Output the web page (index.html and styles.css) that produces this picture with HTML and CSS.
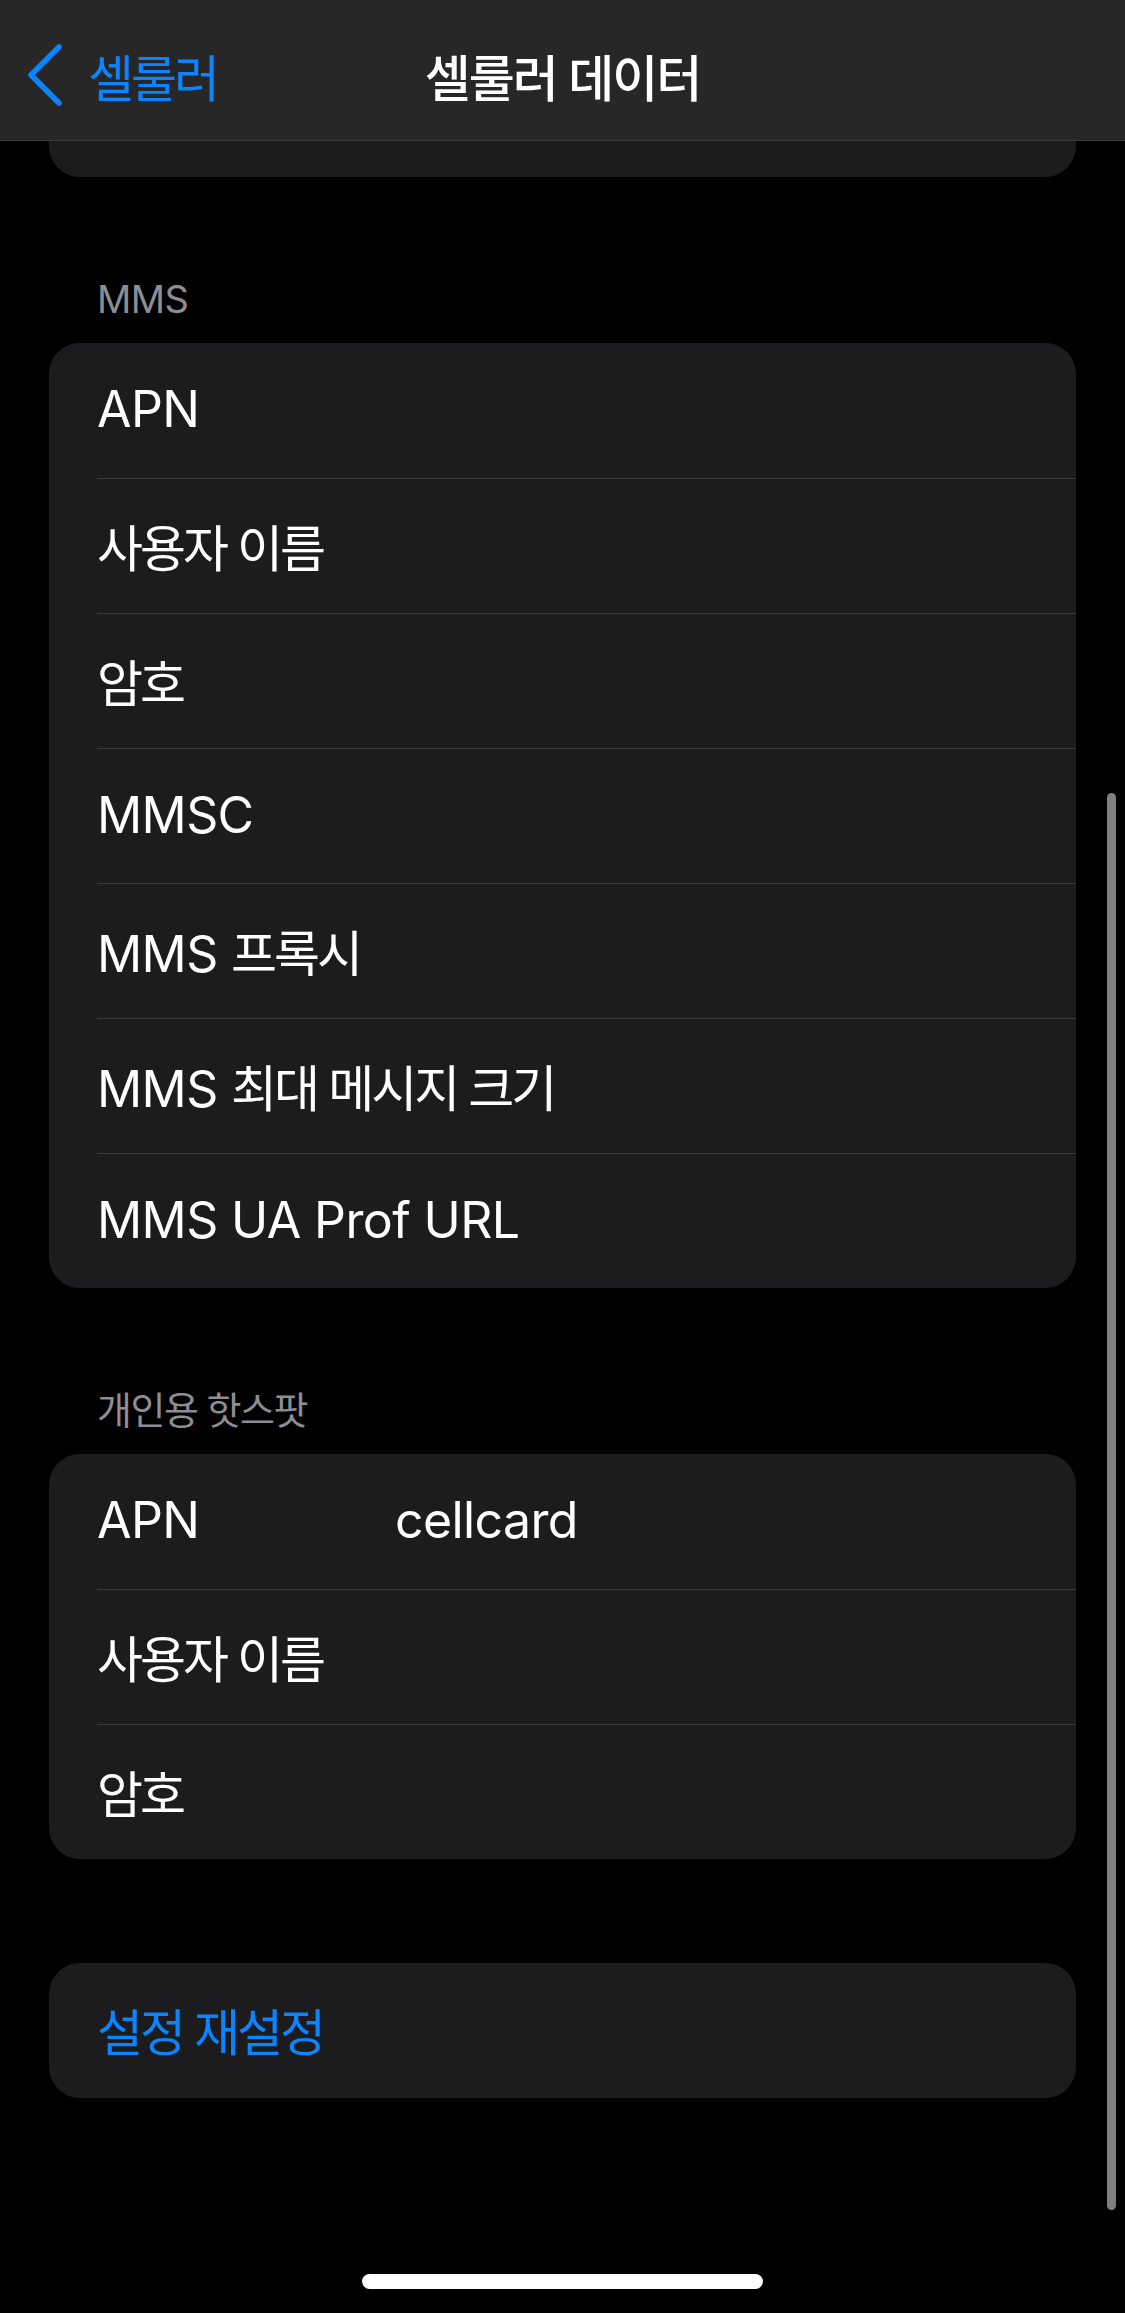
FILE: index.html
```html
<!DOCTYPE html>
<html lang="ko">
<head>
    <meta charset="UTF-8">
    <title>셀룰러 데이터</title>
    <link rel="stylesheet" href="styles.css">
</head>
<body>
    <div class="screen">
        <div class="nav">
            <div class="nav_back">
                <svg class="chevron" width="40" height="62" viewBox="0 0 40 62">
                    <path d="M33 3 L5 31 L33 59" fill="none" stroke="#0a84ff" stroke-width="5.5" stroke-linecap="round" stroke-linejoin="round"/>
                </svg>
                <span class="ko">셀룰러</span>
            </div>
            <div class="nav_title ko">셀룰러 데이터</div>
            <div></div>
        </div>

        <div class="card card_stub"></div>

        <div class="group_head">MMS</div>
        <div class="card">
            <div class="row"><span class="key">APN</span></div>
            <div class="row"><span class="key ko">사용자 이름</span></div>
            <div class="row"><span class="key ko">암호</span></div>
            <div class="row"><span class="key">MMSC</span></div>
            <div class="row"><span class="key">MMS <span class="ko">프록시</span></span></div>
            <div class="row"><span class="key">MMS <span class="ko">최대 메시지 크기</span></span></div>
            <div class="row"><span class="key">MMS UA Prof URL</span></div>
        </div>

        <div class="group_head ko">개인용 핫스팟</div>
        <div class="card">
            <div class="row"><span class="key key_fixed">APN</span><span class="value">cellcard</span></div>
            <div class="row"><span class="key key_fixed ko">사용자 이름</span></div>
            <div class="row"><span class="key key_fixed ko">암호</span></div>
        </div>

        <div class="card card_reset">
            <div class="row row_blue"><span class="key ko">설정 재설정</span></div>
        </div>

        <div class="scrollbar"></div>
        <div class="home_bar"></div>
    </div>
</body>
</html>
```

FILE: styles.css
```css
* {
    margin: 0;
    padding: 0;
    box-sizing: border-box;
}
html, body {
    background-color: #000;
}
body {
    width: 1125px;
    height: 2313px;
    overflow: hidden;
    font-family: Inter, "Noto Sans CJK KR", sans-serif;
    color: #fff;
    letter-spacing: -0.6px;
}
.screen {
    position: relative;
    width: 1125px;
    height: 2313px;
}
.ko {
    letter-spacing: -3px;
}

/* 상단 네비게이션 */
.nav {
    height: 141px;
    padding-top: 9px;
    background-color: #272727;
    border-bottom: 1px solid #3b3b3b;
    display: grid;
    grid-template-columns: 1fr auto 1fr;
    align-items: center;
}
.nav_back {
    display: flex;
    align-items: center;
    gap: 22px;
    padding-left: 26px;
    color: #0a84ff;
    font-size: 50px;
}
.chevron {
    display: block;
}
.nav_title {
    font-size: 50px;
    font-weight: 500;
    letter-spacing: -2px;
}

/* 카드 */
.card {
    margin: 0 49px;
    background-color: #1c1c1e;
    border-radius: 31px;
}
.card_stub {
    height: 36px;
    border-top-left-radius: 0;
    border-top-right-radius: 0;
}
.group_head {
    margin: 99px 49px 21px;
    padding-left: 48px;
    height: 46px;
    line-height: 46px;
    font-size: 38px;
    color: #8d8d93;
}
.group_head.ko {
    letter-spacing: -1.5px;
}
.row {
    height: 135px;
    margin-left: 48px;
    display: flex;
    align-items: center;
    font-size: 50px;
    padding-bottom: 3px;
}
.row + .row {
    border-top: 1px solid #3a3a3c;
}
.key_fixed {
    width: 298px;
    flex: none;
}
.card_reset {
    margin-top: 104px;
}
.row_blue {
    color: #0a84ff;
}

/* 오버레이 */
.scrollbar {
    position: absolute;
    left: 1107px;
    top: 793px;
    width: 9px;
    height: 1417px;
    border-radius: 5px;
    background-color: #7f7f7f;
}
.home_bar {
    position: absolute;
    left: 362px;
    top: 2274px;
    width: 401px;
    height: 15px;
    border-radius: 8px;
    background-color: #fff;
}
```
